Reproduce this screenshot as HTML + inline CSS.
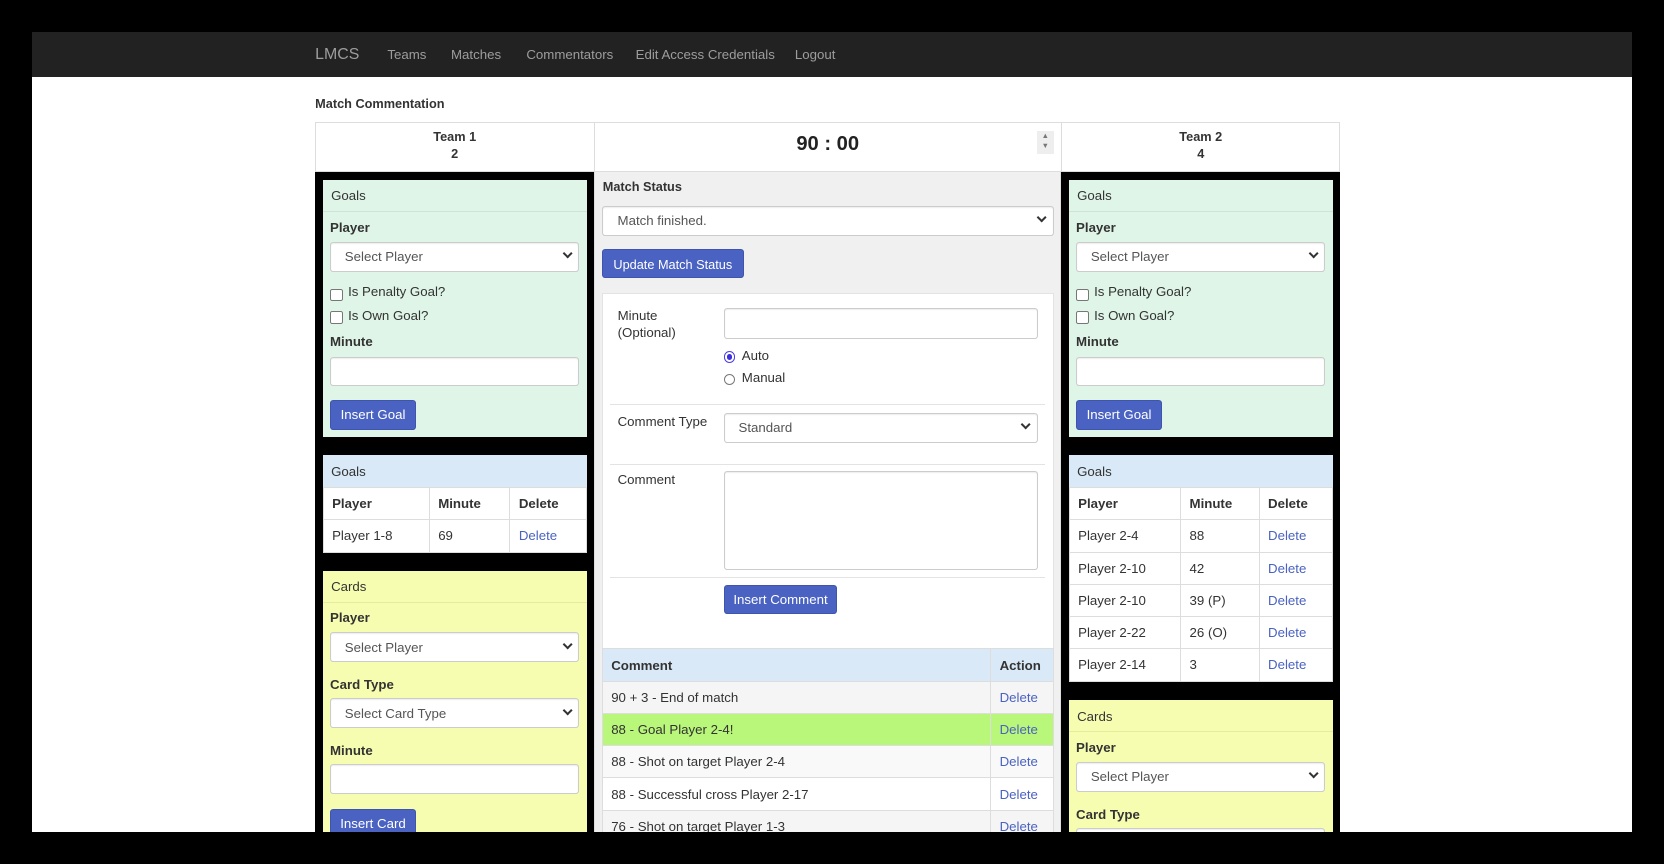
<!DOCTYPE html>
<html><head><meta charset="utf-8">
<style>
html,body{margin:0;padding:0;background:#000;overflow:hidden;width:1664px;height:864px}
#w{position:relative;width:1568px;height:814px;overflow:hidden;zoom:1.06122;font-family:"Liberation Sans",Arial,sans-serif;font-size:12.5px;color:#333}
.a{position:absolute}
#white{left:30px;top:30px;width:1508px;height:754px;background:#fff;overflow:hidden}
#nav{left:0;top:0;width:1508px;height:43px;background:#222}
#nav span{position:absolute;top:14px;color:#9d9d9d;font-size:12.5px}
.b{font-weight:bold}
.sel,.inp{position:absolute;background:#fff;border:1px solid #ccc;border-radius:3px;box-sizing:border-box;box-shadow:inset 0 1px 1px rgba(0,0,0,.075)}
.sel span{position:absolute;left:13px;top:6px;color:#555}
.sel i{position:absolute;right:7px;top:7px;width:5px;height:5px;border-right:2px solid #333;border-bottom:2px solid #333;transform:rotate(45deg)}
.btn{position:absolute;background:#4a62c1;color:#fff;border-radius:3px;text-align:center;box-sizing:border-box;padding-top:6px;border:1px solid #3e55ad}
.cb{position:absolute;width:10px;height:10px;border:1px solid #777;border-radius:2px;background:#fff}
.hd{position:absolute;left:0;right:0;top:0;height:29px;border-bottom:1px solid #cfe3d6;}
table{border-collapse:collapse;position:absolute}
td{border:1px solid #ddd;padding:0 8px;height:30.4px;box-sizing:border-box}
.lk{color:#4a62c1}
</style></head><body><div id="w">
<div class="a" id="white">
 <div class="a" id="nav">
  <span style="left:267px;font-size:15px;top:13px">LMCS</span>
  <span style="left:335px">Teams</span>
  <span style="left:395px">Matches</span>
  <span style="left:466px">Commentators</span>
  <span style="left:569px">Edit Access Credentials</span>
  <span style="left:719px">Logout</span>
 </div>
 <div class="a b" style="left:267px;top:60px;font-size:12px">Match Commentation</div>
 <div class="a" style="left:267px;top:85px;width:966px;height:47px;border:1px solid #ddd;box-sizing:border-box"></div>
 <div class="a" style="left:530px;top:85px;width:1px;height:47px;background:#ddd"></div>
 <div class="a" style="left:970px;top:85px;width:1px;height:47px;background:#ddd"></div>
 <div class="a b" style="left:267px;width:263px;top:92px;text-align:center;font-size:12px;line-height:16px">Team 1<br>2</div>
 <div class="a b" style="left:970px;width:263px;top:92px;text-align:center;font-size:12px;line-height:16px">Team 2<br>4</div>
 <div class="a b" style="left:530px;width:440px;top:95px;text-align:center;font-size:19px;color:#222">90 : 00</div>
 <div class="a" style="left:947px;top:93px;width:16px;height:22px;background:#eee;font-size:7px;color:#777;text-align:center;line-height:10px">▲<br>▼</div>

 <div class="a" style="left:267px;top:132px;width:263px;height:630px;background:#000"></div>
 <div class="a" style="left:274px;top:140px;width:249px;height:242px;background:#dff5e8">
  <div class="hd"><span class="a" style="left:8px;top:7px">Goals</span></div>
  <div class="a b" style="left:7px;top:37px">Player</div>
  <div class="sel" style="left:7px;top:58px;width:235px;height:28px"><span>Select Player</span><i></i></div>
  <div class="cb" style="left:7px;top:102px"></div><div class="a" style="left:24px;top:98px">Is Penalty Goal?</div>
  <div class="cb" style="left:7px;top:123px"></div><div class="a" style="left:24px;top:120px">Is Own Goal?</div>
  <div class="a b" style="left:7px;top:145px">Minute</div>
  <div class="inp" style="left:7px;top:166px;width:235px;height:28px"></div>
  <div class="btn" style="left:7px;top:207px;width:81px;height:28px">Insert Goal</div>
 </div>
 <div class="a" style="left:274px;top:399px;width:249px;height:91px;background:#fff">
  <div class="a" style="left:0;top:0;width:249px;height:30px;background:#d9e9f7"><span class="a" style="left:8px;top:8px">Goals</span></div>
  <table style="left:0;top:30px;width:249px"><tr class="b"><td style="width:100px">Player</td><td style="width:76px">Minute</td><td>Delete</td></tr>
  <tr><td>Player 1-8</td><td>69</td><td class="lk">Delete</td></tr></table>
 </div>
 <div class="a" style="left:274px;top:508px;width:249px;height:260px;background:#f7fdb0">
  <div class="hd" style="border-color:#e6ec9e"><span class="a" style="left:8px;top:8px">Cards</span></div>
  <div class="a b" style="left:7px;top:37px">Player</div>
  <div class="sel" style="left:7px;top:58px;width:235px;height:28px"><span>Select Player</span><i></i></div>
  <div class="a b" style="left:7px;top:100px">Card Type</div>
  <div class="sel" style="left:7px;top:120px;width:235px;height:28px"><span>Select Card Type</span><i></i></div>
  <div class="a b" style="left:7px;top:162px">Minute</div>
  <div class="inp" style="left:7px;top:182px;width:235px;height:28px"></div>
  <div class="btn" style="left:7px;top:224px;width:81px;height:28px">Insert Card</div>
 </div>

 <div class="a" style="left:530px;top:132px;width:440px;height:630px;background:#f0f0f0;border-left:1px solid #ddd;border-right:1px solid #ddd;box-sizing:border-box"></div>
 <div class="a b" style="left:538px;top:139px;font-size:12px">Match Status</div>
 <div class="sel" style="left:537px;top:164px;width:426px;height:28px"><span style="left:14px">Match finished.</span><i></i></div>
 <div class="btn" style="left:537px;top:205px;width:134px;height:27px;font-size:12px">Update Match Status</div>
 <div class="a" style="left:537px;top:246px;width:426px;height:336px;background:#fff;border:1px solid #e3e3e3;box-sizing:border-box"></div>
 <div class="a" style="left:552px;top:260px;line-height:16px">Minute<br>(Optional)</div>
 <div class="inp" style="left:652px;top:260px;width:296px;height:29px"></div>
 <div class="a" style="left:652px;top:301px;width:9px;height:9px;border:1px solid #4a3de8;border-radius:50%;background:#fff"><div class="a" style="left:2px;top:2px;width:5px;height:5px;border-radius:50%;background:#3b2ee0"></div></div>
 <div class="a" style="left:669px;top:298px">Auto</div>
 <div class="a" style="left:652px;top:322px;width:9px;height:9px;border:1px solid #777;border-radius:50%"></div>
 <div class="a" style="left:669px;top:319px">Manual</div>
 <div class="a" style="left:545px;top:351px;width:410px;height:1px;background:#e3e3e3"></div>
 <div class="a" style="left:552px;top:360px">Comment Type</div>
 <div class="sel" style="left:652px;top:359px;width:296px;height:28px"><span>Standard</span><i></i></div>
 <div class="a" style="left:545px;top:407px;width:410px;height:1px;background:#e3e3e3"></div>
 <div class="a" style="left:552px;top:415px">Comment</div>
 <div class="inp" style="left:652px;top:414px;width:296px;height:93px"></div>
 <div class="a" style="left:545px;top:514px;width:410px;height:1px;background:#e3e3e3"></div>
 <div class="btn" style="left:652px;top:521px;width:107px;height:28px">Insert Comment</div>
 <table style="left:537px;top:581px;width:426px">
  <tr class="b" style="background:#d9e9f7"><td style="width:366px">Comment</td><td>Action</td></tr>
  <tr style="background:#f5f5f5"><td>90 + 3 - End of match</td><td class="lk">Delete</td></tr>
  <tr style="background:#b9f77a"><td>88 - Goal Player 2-4!</td><td class="lk">Delete</td></tr>
  <tr style="background:#f9f9f9"><td>88 - Shot on target Player 2-4</td><td class="lk">Delete</td></tr>
  <tr style="background:#fff"><td>88 - Successful cross Player 2-17</td><td class="lk">Delete</td></tr>
  <tr style="background:#f5f5f5"><td>76 - Shot on target Player 1-3</td><td class="lk">Delete</td></tr>
 </table>

 <div class="a" style="left:970px;top:132px;width:263px;height:630px;background:#000"></div>
 <div class="a" style="left:977px;top:140px;width:249px;height:242px;background:#dff5e8">
  <div class="hd"><span class="a" style="left:8px;top:7px">Goals</span></div>
  <div class="a b" style="left:7px;top:37px">Player</div>
  <div class="sel" style="left:7px;top:58px;width:235px;height:28px"><span>Select Player</span><i></i></div>
  <div class="cb" style="left:7px;top:102px"></div><div class="a" style="left:24px;top:98px">Is Penalty Goal?</div>
  <div class="cb" style="left:7px;top:123px"></div><div class="a" style="left:24px;top:120px">Is Own Goal?</div>
  <div class="a b" style="left:7px;top:145px">Minute</div>
  <div class="inp" style="left:7px;top:166px;width:235px;height:28px"></div>
  <div class="btn" style="left:7px;top:207px;width:81px;height:28px">Insert Goal</div>
 </div>
 <div class="a" style="left:977px;top:399px;width:249px;height:214px;background:#fff">
  <div class="a" style="left:0;top:0;width:249px;height:30px;background:#d9e9f7"><span class="a" style="left:8px;top:8px">Goals</span></div>
  <table style="left:0;top:30px;width:249px"><tr class="b"><td style="width:105px">Player</td><td style="width:74px">Minute</td><td>Delete</td></tr>
  <tr><td>Player 2-4</td><td>88</td><td class="lk">Delete</td></tr>
  <tr><td>Player 2-10</td><td>42</td><td class="lk">Delete</td></tr>
  <tr><td>Player 2-10</td><td>39 (P)</td><td class="lk">Delete</td></tr>
  <tr><td>Player 2-22</td><td>26 (O)</td><td class="lk">Delete</td></tr>
  <tr><td>Player 2-14</td><td>3</td><td class="lk">Delete</td></tr></table>
 </div>
 <div class="a" style="left:977px;top:630px;width:249px;height:200px;background:#f7fdb0">
  <div class="hd" style="border-color:#e6ec9e"><span class="a" style="left:8px;top:8px">Cards</span></div>
  <div class="a b" style="left:7px;top:37px">Player</div>
  <div class="sel" style="left:7px;top:58px;width:235px;height:28px"><span>Select Player</span><i></i></div>
  <div class="a b" style="left:7px;top:100px">Card Type</div>
  <div class="sel" style="left:7px;top:120px;width:235px;height:28px"><span>Select Card Type</span><i></i></div>
 </div>
</div>
</div></body></html>
